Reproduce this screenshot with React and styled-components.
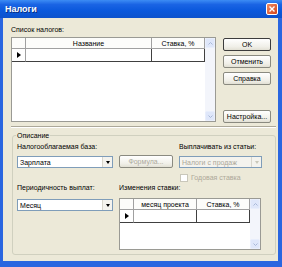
import React from 'react'
import styled, { createGlobalStyle } from 'styled-components'

const GlobalStyle = createGlobalStyle`
  html, body { margin: 0; padding: 0; }
  body {
    width: 282px;
    height: 267px;
    overflow: hidden;
    font-family: "Liberation Sans", Arial, sans-serif;
    font-size: 7px;
    color: #000;
  }
`

const Window = styled.div`
  width: 282px;
  height: 267px;
  box-sizing: border-box;
  display: flex;
  flex-direction: column;
  background: #2a66e0;
  padding: 0 4px 6px 3px;
`

const TitleBar = styled.div`
  height: 18px;
  margin: 0 -4px 0 -3px;
  padding: 0 4px 0 5px;
  display: flex;
  align-items: center;
  justify-content: space-between;
  background: linear-gradient(#3c8cf4 0%, #1a64e4 25%, #0a58dc 60%, #0c52cc 100%);
  color: #fff;
  font-weight: bold;
  font-size: 9px;
  text-shadow: 1px 1px 0 #0a2f80;
`

const CloseBtn = styled.div`
  width: 12px;
  height: 12px;
  box-sizing: border-box;
  border: 1px solid #fff;
  border-radius: 2px;
  background: linear-gradient(135deg, #f08a62, #d2441c);
  display: flex;
  align-items: center;
  justify-content: center;
`

const Body = styled.div`
  flex: 1;
  background: #ece9d8;
  display: flex;
  flex-direction: column;
  padding: 7px 2px 6px 8px;
`

const Label = styled.div`
  line-height: 9px;
  height: 9px;
  white-space: nowrap;
  grid-column: ${p => p.$col || 'auto'};
  color: ${p => (p.disabled ? '#aca899' : '#000')};
`

const TopRow = styled.div`
  display: flex;
  margin-top: 3px;
  padding-right: 5px;
`

const ButtonCol = styled.div`
  margin-left: 7px;
  width: 49px;
  display: flex;
  flex-direction: column;
  padding-top: 1px;
`

const Button = styled.div`
  height: 13px;
  box-sizing: border-box;
  margin-top: ${p => p.$gap || 0}px;
  border: 1px solid ${p => (p.$default ? '#3c3c3c' : '#8a8a80')};
  border-radius: 2px;
  background: linear-gradient(#ffffff, #f0efe8 70%, #e2e0d4);
  display: flex;
  align-items: center;
  justify-content: center;
  line-height: 9px;
  color: ${p => (p.disabled ? '#aca899' : '#000')};
  white-space: nowrap;
`

const Separator = styled.div`
  margin: 3px 0 0 0;
  height: 0;
  border-top: 1px solid #aca899;
  border-bottom: 1px solid #fff;
`

const GroupBox = styled.fieldset`
  flex: 1;
  margin: 3px 0 0 1px;
  padding: 2px 4px 4px 4px;
  border: 1px solid #d0d0bf;
  border-radius: 3px;
  min-width: 0;
`

const Legend = styled.legend`
  padding: 0 1px;
  margin-left: -1px;
  line-height: 9px;
  font-size: 7px;
`

const Form = styled.div`
  display: grid;
  grid-template-columns: 96px 54px 83px;
  grid-template-rows: 13px 15px 13px 14px 53px;
  column-gap: 6px;
`

const Combo = styled.div`
  height: 12px;
  box-sizing: border-box;
  margin-top: ${p => p.$top || 1}px;
  border: 1px solid #7f9db9;
  background: ${p => (p.disabled ? '#f4f3ee' : '#fff')};
  color: ${p => (p.disabled ? '#aca899' : '#000')};
  display: flex;
  align-items: center;
  padding-left: 2px;
  line-height: 9px;
  white-space: nowrap;
`

const ComboText = styled.span`
  flex: 1;
`

const ComboArrow = styled.div`
  width: 9px;
  height: 10px;
  border-left: 1px solid #d8d6cc;
  background: #f4f3ee;
  display: flex;
  align-items: center;
  justify-content: center;
  &::after {
    content: '';
    border-left: 2.5px solid transparent;
    border-right: 2.5px solid transparent;
    border-top: 3px solid ${p => (p.disabled ? '#c9c7ba' : '#000')};
  }
`

const CheckRow = styled.div`
  grid-column: 3;
  display: flex;
  align-items: center;
  gap: 3px;
  margin: 3px 0 0 1px;
  height: 9px;
  color: #aca899;
  line-height: 9px;
`

const CheckBox = styled.div`
  width: 8px;
  height: 8px;
  box-sizing: border-box;
  border: 1px solid #c9c7ba;
  background: #fff;
`

const GridFrame = styled.div`
  display: flex;
  box-sizing: border-box;
  width: ${p => p.$w}px;
  height: ${p => p.$h}px;
  border: 1px solid #9a9a94;
  background: #fff;
  grid-column: ${p => p.$col || 'auto'};
  margin-top: ${p => p.$top || 0}px;
`

const GridTable = styled.div`
  flex: 1;
  display: flex;
  flex-direction: column;
`

const GridRow = styled.div`
  display: flex;
  height: ${p => p.$h}px;
`

const HeadCell = styled.div`
  width: ${p => p.$w}px;
  box-sizing: border-box;
  border-right: 1px solid #a0a0a0;
  border-bottom: 1px solid #a0a0a0;
  background: #fcfcfa;
  display: flex;
  align-items: center;
  justify-content: center;
  line-height: 9px;
  white-space: nowrap;
`

const Cell = styled.div`
  width: ${p => p.$w}px;
  box-sizing: border-box;
  border-right: 1px solid ${p => (p.$sel ? '#a0a0a0' : '#404040')};
  border-bottom: 1px solid #404040;
  background: #fff;
  display: flex;
  align-items: center;
  justify-content: center;
`

const RowArrow = styled.div`
  border-top: 3px solid transparent;
  border-bottom: 3px solid transparent;
  border-left: 4px solid #000;
  margin-left: 1px;
`

const Scroll = styled.div`
  width: 10px;
  display: flex;
  flex-direction: column;
  justify-content: space-between;
  background: #f3f5fb;
`

const ScrollBtn = styled.div`
  height: 10px;
  box-sizing: border-box;
  border: 1px solid #e8eefc;
  border-radius: 2px;
  background: #dfe7fa;
  display: flex;
  align-items: center;
  justify-content: center;
`

function Chevron({ down }) {
  return (
    <svg width="5" height="3" viewBox="0 0 5 3">
      <path d={down ? 'M0.5 0.5 L2.5 2.5 L4.5 0.5' : 'M0.5 2.5 L2.5 0.5 L4.5 2.5'} fill="none" stroke="#a8b8d8" strokeWidth="1" />
    </svg>
  )
}

function DataGrid({ w, h, cols, col, top }) {
  return (
    <GridFrame $w={w} $h={h} $col={col} $top={top}>
      <GridTable>
        <GridRow $h={11}>
          <HeadCell $w={14} />
          {cols.map(c => (
            <HeadCell key={c.t} $w={c.w}>{c.t}</HeadCell>
          ))}
        </GridRow>
        <GridRow $h={13}>
          <Cell $w={14} $sel><RowArrow /></Cell>
          {cols.map(c => (
            <Cell key={c.t} $w={c.w} />
          ))}
        </GridRow>
      </GridTable>
      <Scroll>
        <ScrollBtn><Chevron /></ScrollBtn>
        <ScrollBtn><Chevron down /></ScrollBtn>
      </Scroll>
    </GridFrame>
  )
}

export default function App() {
  return (
    <Window>
      <GlobalStyle />
      <TitleBar>
        <span>Налоги</span>
        <CloseBtn>
          <svg width="6" height="6" viewBox="0 0 6 6">
            <path d="M0.5 0.5 L5.5 5.5 M5.5 0.5 L0.5 5.5" stroke="#fff" strokeWidth="1.4" />
          </svg>
        </CloseBtn>
      </TitleBar>
      <Body>
        <Label>Список налогов:</Label>
        <TopRow>
          <DataGrid w={205} h={85} cols={[{ t: 'Название', w: 126 }, { t: 'Ставка, %', w: 53 }]} />
          <ButtonCol>
            <Button $default>OK</Button>
            <Button $gap={4}>Отменить</Button>
            <Button $gap={4}>Справка</Button>
            <Button $gap={25}>Настройка...</Button>
          </ButtonCol>
        </TopRow>
        <Separator />
        <GroupBox>
          <Legend>Описание</Legend>
          <Form>
            <Label>Налогооблагаемая база:</Label>
            <span />
            <Label>Выплачивать из статьи:</Label>

            <Combo>
              <ComboText>Зарплата</ComboText>
              <ComboArrow />
            </Combo>
            <Button disabled>Формула...</Button>
            <Combo disabled>
              <ComboText>Налоги с продаж</ComboText>
              <ComboArrow disabled />
            </Combo>

            <CheckRow>
              <CheckBox />
              Годовая ставка
            </CheckRow>

            <Label>Периодичность выплат:</Label>
            <Label $col="2 / 4">Изменения ставки:</Label>

            <Combo $top={2}>
              <ComboText>Месяц</ComboText>
              <ComboArrow />
            </Combo>
            <DataGrid w={142} h={52} col="2 / 4" top={1} cols={[{ t: 'месяц проекта', w: 63 }, { t: 'Ставка, %', w: 53 }]} />
          </Form>
        </GroupBox>
      </Body>
    </Window>
  )
}
